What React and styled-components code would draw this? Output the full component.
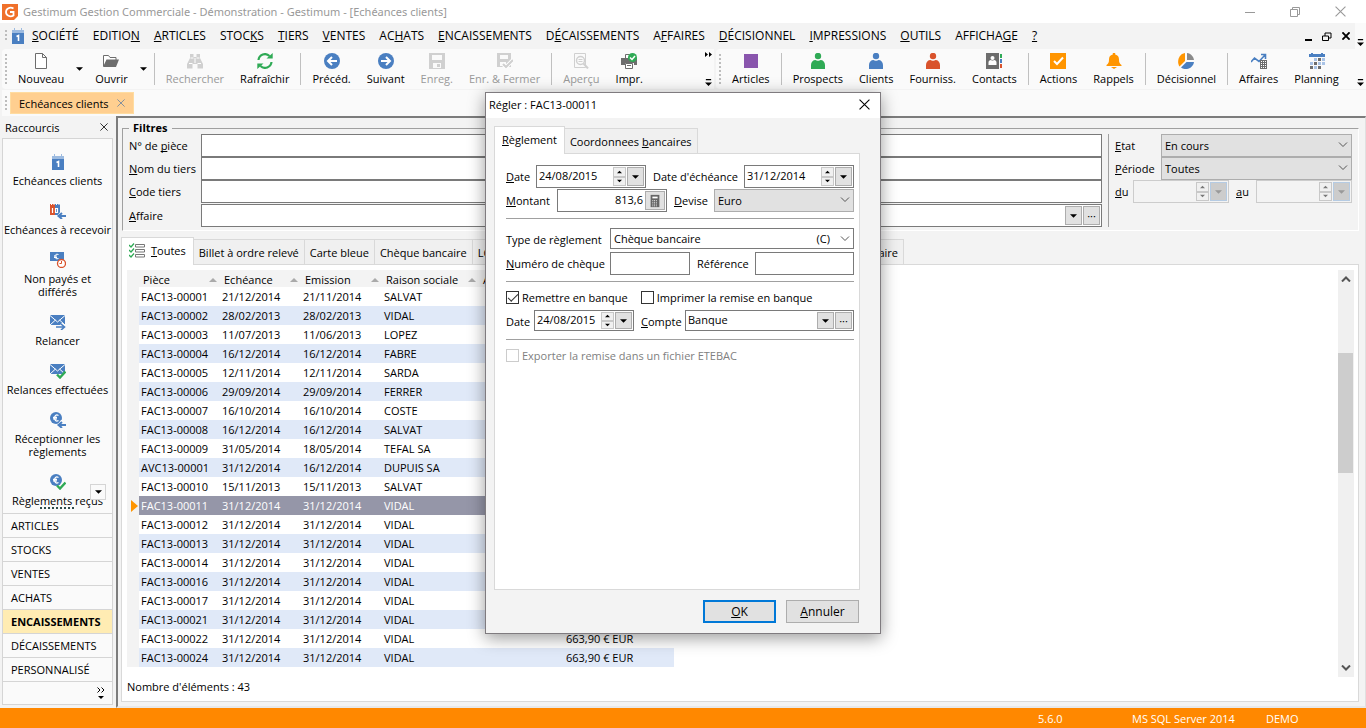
import React, { useState } from "react";
import styled, { createGlobalStyle, css } from "styled-components";

const blue = "#4a7fc1";
const gray = "#6d6d6d";
const pale = "#d0d0d0";
const green = "#2faa55";
const red = "#d9532c";
const orange = "#ff9500";

const menus = [
	"&SOCIÉTÉ", "EDITIO&N", "&ARTICLES", "STOC&KS", "&TIERS", "&VENTES", "AC&HATS", "&ENCAISSEMENTS",
	"D&ÉCAISSEMENTS", "A&FFAIRES", "&DÉCISIONNEL", "&IMPRESSIONS", "&OUTILS", "AFFICHA&GE", "&?",
];

const mainTools = [
	{ label: "Nouveau", icon: "file", arrow: true },
	{ label: "Ouvrir", icon: "folder", arrow: true },
	null,
	{ label: "Rechercher", icon: "binoculars", disabled: true },
	{ label: "Rafraîchir", icon: "refresh" },
	null,
	{ label: "Précéd.", icon: "prev" },
	{ label: "Suivant", icon: "next" },
	{ label: "Enreg.", icon: "save", disabled: true },
	{ label: "Enr. & Fermer", icon: "saveClose", disabled: true },
	null,
	{ label: "Aperçu", icon: "preview", disabled: true },
	{ label: "Impr.", icon: "print" },
];

const moduleTools = [
	{ label: "Articles", icon: "square" },
	null,
	{ label: "Prospects", icon: "personGreen" },
	{ label: "Clients", icon: "personBlue" },
	{ label: "Fourniss.", icon: "personRed" },
	{ label: "Contacts", icon: "contacts" },
	null,
	{ label: "Actions", icon: "actions" },
	{ label: "Rappels", icon: "bell" },
	null,
	{ label: "Décisionnel", icon: "pie" },
	null,
	{ label: "Affaires", icon: "affaires" },
	{ label: "Planning", icon: "planning" },
];

const shortcuts = [
	{ label: "Echéances clients", icon: "calendar" },
	{ label: "Echéances à recevoir", icon: "calendarIn" },
	{ label: "Non payés et différés", icon: "unpaid" },
	{ label: "Relancer", icon: "mailOut" },
	{ label: "Relances effectuées", icon: "mailDone" },
	{ label: "Réceptionner les règlements", icon: "euroIn" },
	{ label: "Règlements reçus", icon: "euroDone" },
];

const categories = ["ARTICLES", "STOCKS", "VENTES", "ACHATS", "ENCAISSEMENTS", "DÉCAISSEMENTS", "PERSONNALISÉ"];

const rows = [
	["FAC13-00001", "21/12/2014", "21/11/2014", "SALVAT"],
	["FAC13-00002", "28/02/2013", "28/02/2013", "VIDAL"],
	["FAC13-00003", "11/07/2013", "11/06/2013", "LOPEZ"],
	["FAC13-00004", "16/12/2014", "16/12/2014", "FABRE"],
	["FAC13-00005", "12/11/2014", "12/11/2014", "SARDA"],
	["FAC13-00006", "29/09/2014", "29/09/2014", "FERRER"],
	["FAC13-00007", "16/10/2014", "16/10/2014", "COSTE"],
	["FAC13-00008", "16/12/2014", "16/12/2014", "SALVAT"],
	["FAC13-00009", "31/05/2014", "18/05/2014", "TEFAL SA"],
	["AVC13-00001", "31/12/2014", "16/12/2014", "DUPUIS SA"],
	["FAC13-00010", "15/11/2013", "15/11/2013", "SALVAT"],
	["FAC13-00011", "31/12/2014", "31/12/2014", "VIDAL"],
	["FAC13-00012", "31/12/2014", "31/12/2014", "VIDAL"],
	["FAC13-00013", "31/12/2014", "31/12/2014", "VIDAL"],
	["FAC13-00014", "31/12/2014", "31/12/2014", "VIDAL"],
	["FAC13-00016", "31/12/2014", "31/12/2014", "VIDAL"],
	["FAC13-00017", "31/12/2014", "31/12/2014", "VIDAL"],
	["FAC13-00021", "31/12/2014", "31/12/2014", "VIDAL"],
	["FAC13-00022", "31/12/2014", "31/12/2014", "VIDAL", "663,90 € EUR"],
	["FAC13-00024", "31/12/2014", "31/12/2014", "VIDAL", "663,90 € EUR"],
];

const person = (color) => (
	<g fill={color}>
		<circle cx="8" cy="3" r="3.2" />
		<path d="M1 16v-4c0-3 2-5 4.500-5 1 1 4 1 5 0C13 7 15 9 15 12v4z" />
	</g>
);

const envelope = (
	<>
		<path fill={blue} d="M0 1h15v10H0z" />
		<path d="M0 1.500l7.500 6.500L15 1.500M0 11l5.500-5M15 11L9.500 6" fill="none" stroke="#fff" />
	</>
);

const euro = (
	<>
		<circle cx="6" cy="6" r="6" fill={blue} />
		<path d="M8.500 3.500C6 2 4.500 4 4.500 6s1.500 4 4 2.500M3 5.300h4M3 6.800h4" fill="none" stroke="#fff" strokeWidth="1.200" />
	</>
);

const smallCheck = <path d="M7 11.500l3 3 5.500-6" fill="none" stroke={green} strokeWidth="2.400" />;
const smallBack = (
	<>
		<path fill="#fafafa" d="M7 13l4-5h1v3h4v5H9z" />
		<path d="M16 13H9m3-3l-3.500 3 3.500 3" fill="none" stroke={blue} strokeWidth="2" />
	</>
);

const icons = {
	file: <path d="M2.500 .5h7l4 4v11h-11zM9.500 .5v4h4" fill="#fff" stroke={gray} />,
	folder: (
		<>
			<path d="M.5 13V2.500h5l1.500 2h6V7" fill="#fff" stroke={gray} />
			<path d="M3.500 6.500H16L13 14H0z" fill={gray} />
		</>
	),
	binoculars: (
		<>
			<path fill={pale} d="M3 1h3.500v3h3V1H13v4l3 6v4.500h-5.500V11h-5v4.500H0V11l3-6z" />
			<path d="M2 10.500h3.500M10.500 10.500H14M8 5v5M3.500 5h3M9.500 5h3" stroke="#fff" fill="none" />
		</>
	),
	refresh: (
		<>
			<path d="M1.500 7A6.500 6.500 0 0 1 12.500 3M14.500 9A6.500 6.500 0 0 1 3.500 13" fill="none" stroke={green} strokeWidth="2.200" />
			<path fill={green} d="M9.500 5.500h6.200V0zM6.500 10.500H.3V16z" />
		</>
	),
	prev: (
		<>
			<circle cx="8" cy="8" r="8" fill={blue} />
			<path d="M13 8H4m4-4L4 8l4 4" fill="none" stroke="#fff" strokeWidth="2" />
		</>
	),
	next: (
		<>
			<circle cx="8" cy="8" r="8" fill={blue} />
			<path d="M3 8h9M8 4l4 4-4 4" fill="none" stroke="#fff" strokeWidth="2" />
		</>
	),
	save: <path fillRule="evenodd" fill={pale} d="M0 0h16v16H0zM3 2h10v5H3zM4 10h8v5H4zM8 11h3v3H8z" />,
	saveClose: (
		<>
			<path fillRule="evenodd" fill={pale} d="M0 0h14v14H0zM3 2h8v4H3zM3 9h6v4H3z" />
			<path d="M6 11l3 3 7-7" fill="none" stroke="#fff" strokeWidth="4" />
			<path d="M6 11l3 3 7-7" fill="none" stroke={pale} strokeWidth="2.200" />
		</>
	),
	preview: (
		<g fill="none" stroke={pale}>
			<path d="M1.500 .5h11v14h-11z" />
			<circle cx="7.500" cy="7.500" r="4" strokeWidth="1.500" />
			<path d="M10.500 10.500l4.500 5" strokeWidth="2" />
			<path d="M5.500 6.500h4M5.500 8.500h4" />
		</g>
	),
	print: (
		<>
			<path fill={gray} d="M0 5h16v7h-3v-2H4v2H0z" />
			<path d="M4.500 10.500h7v5h-7zM4.500 5V1.500h4M6 12.500h4" fill="#fff" stroke={gray} />
			<circle cx="11.500" cy="4.500" r="4.500" fill={green} />
			<path d="M9 4.500l2 2 3-3.500" fill="none" stroke="#fff" strokeWidth="1.500" />
		</>
	),
	square: <path fill="#8955ad" d="M1 1h14v14H1z" />,
	personGreen: person(green),
	personBlue: person(blue),
	personRed: person(red),
	contacts: (
		<>
			<path fill={gray} d="M0 0h13v16H0z" />
			<circle cx="6.500" cy="5" r="2" fill="#fff" />
			<path fill="#fff" d="M2.500 12V9.500c0-1.500 1-2.500 2.500-2.500 1 .7 2 .7 3 0 1.500 0 2.500 1 2.500 2.500V12z" />
			<path fill={green} d="M14 1h2v4h-2z" />
			<path fill={blue} d="M14 6h2v4h-2z" />
			<path fill={red} d="M14 11h2v4h-2z" />
		</>
	),
	actions: (
		<>
			<path fill={orange} d="M0 0h16v16H0z" />
			<path d="M4 8l3 3 6-6.500" fill="none" stroke="#fff" strokeWidth="2" />
		</>
	),
	bell: (
		<path fill={orange} d="M6.800 0h2.400v1.500C12 2 13 4 13 6.500c0 3 .6 4 2.500 5.500v1H.5v-1C2.400 10.500 3 9.500 3 6.500 3 4 4 2 6.800 1.500zM5 14h6l-3 2z" />
	),
	pie: (
		<>
			<path fill={orange} d="M7 0v8l-5.500 5.500C-1.500 9 .5 1 7 0z" />
			<path fill="#8a8a8a" d="M9 0c4 .5 6.500 3.500 7 7H9z" />
			<path fill={blue} d="M8.500 9H16c-1 6.500-8.500 9-13 5.500z" />
		</>
	),
	affaires: (
		<>
			<path d="M0 9l3.500-4L8 8.500 14 2M10 1.500h4.500V6" fill="none" stroke={blue} strokeWidth="1.600" />
			<path fill={gray} d="M9 7h7v9H9z" />
			<path d="M10 8.500h5M10 10.500h5M10 12.500h5M10 14.500h5" stroke="#fff" strokeDasharray="1 1" />
		</>
	),
	planning: (
		<>
			<path fill={blue} d="M0 1h2V0h2v1h8V0h2v1h2v3H0z" />
			<path d="M5 6.500h11M1 10.500h15M1 14.500h11" stroke="#a9c3e6" strokeWidth="3" strokeDasharray="3 1" />
			<path fill={gray} d="M9 5h3v3H9zM1 13h3v3H1zM9 13h3v3H9zM5 9h3v3H5z" />
		</>
	),
	calendar: (
		<>
			<path fill="#9dbbe0" d="M2 2h2V0h1v2h6V0h1v2h2v3H2z" />
			<path fill={blue} d="M2 5h12v11H2z" />
			<path d="M6.500 8.500l2-1V13" fill="none" stroke="#fff" strokeWidth="1.600" />
		</>
	),
	calendarIn: (
		<>
			<path fill={red} d="M0 1h5v11H0z" />
			<path fill={blue} d="M5 1h5v11H5z" />
			<path d="M1.500 0v2M4 0v2M6.500 0v2M9 0v2" stroke="#fff" />
			<path d="M2.500 5v5M5.500 5.500h2v4h-2z" fill="none" stroke="#fff" strokeWidth="1.200" />
			{smallBack}
		</>
	),
	unpaid: (
		<>
			<path fill={blue} d="M0 0h14v9H0z" />
			<path d="M8.500 2.500C6 1.500 5 3 5 4.500s1 3 3.500 2M4 4h3M4 5.500h3" fill="none" stroke="#fff" />
			<circle cx="11.500" cy="11.500" r="4" fill="#fff" stroke={red} strokeWidth="1.300" />
			<path d="M11.500 9v2.500H9.500" fill="none" stroke={red} />
		</>
	),
	mailOut: (
		<>
			{envelope}
			<path d="M5 13h9m-3-3l3.500 3-3.500 3" fill="none" stroke="#fafafa" strokeWidth="4" />
			<path d="M6 13h8m-3-3l3.500 3-3.500 3" fill="none" stroke={blue} strokeWidth="1.600" />
		</>
	),
	mailDone: (<>{envelope}{smallCheck}</>),
	euroIn: (<>{euro}{smallBack}</>),
	euroDone: (<>{euro}{smallCheck}</>),
	list: (
		<>
			<path d="M6.500 1.500h9V4h-9zM6.500 6.500h9V9h-9zM6.500 11.500h9V14h-9z" fill="#fff" stroke="#777" />
			<path d="M0 2l2 2 3-3.500M0 7l2 2 3-3.500M0 12l2 2 3-3.500" fill="none" stroke={green} strokeWidth="1.300" />
		</>
	),
	logo: (
		<>
			<path fill="#f0702a" d="M0 0h16v12l-4 4H0z" />
			<path d="M11.500 4.500C8 2.500 4 4.500 4 8s4 5.500 7.500 3.500V8H8" fill="none" stroke="#fff" strokeWidth="1.800" />
		</>
	),
	calculator: (
		<>
			<path fill="#666" d="M3 1h10v14H3z" />
			<path fill="#fff" d="M5 3h6v2H5z" />
			<path d="M5 7.500h6M5 9.500h6M5 11.500h6M5 13.500h6" stroke="#fff" strokeDasharray="1 1" />
		</>
	),
};

const Icon = ({ name, size = 16 }) => (
	<svg width={size} height={size} viewBox="0 0 16 16" aria-hidden="true">{icons[name]}</svg>
);

const Caret = ({ up, w = 7 }) => (
	<svg width={w} height="4" viewBox="0 0 8 4" aria-hidden="true">
		<path d={up ? "M0 4h8L4 0z" : "M0 0h8L4 4z"} fill="currentColor" />
	</svg>
);

const Chevron = ({ up, bold }) => (
	<svg width="10" height="6" viewBox="0 0 10 6" aria-hidden="true">
		<path
			d={up ? "M1 5.500L5 1.500l4 4" : "M1 .5l4 4 4-4"}
			fill="none"
			stroke="currentColor"
			strokeWidth={bold ? 2 : 1}
		/>
	</svg>
);

const Cross = ({ size = 9, weight = 1 }) => (
	<svg width={size} height={size} viewBox="0 0 10 10" aria-hidden="true">
		<path d="M.5 .5l9 9M9.500 .5l-9 9" stroke="currentColor" strokeWidth={weight} />
	</svg>
);

const More = () => (
	<svg width="7" height="7" viewBox="0 0 8 8" aria-hidden="true">
		<path d="M1 0h6v1.500H1zM0 4h8L4 8z" />
	</svg>
);

// "&" marks the shortcut letter, as in the menu resources
const Mnemonic = ({ text }) => {
	const [before, after] = text.split("&");
	if (after === undefined) return before;
	return <span>{before}<u>{after[0]}</u>{after.slice(1)}</span>;
};

const Tools = ({ items }) =>
	items.map((item, i) =>
		item ? (
			<React.Fragment key={i}>
				<StTool disabled={item.disabled}>
					<Icon name={item.icon} />
					{item.label}
				</StTool>
				{item.arrow && <StToolArrow aria-label={item.label + " : options"}><Caret /></StToolArrow>}
			</React.Fragment>
		) : (
			<StToolSep key={i} />
		)
	);

const DateField = ({ id, value, disabled, width }) => (
	<StField $w={width} $disabled={disabled}>
		<StBareInput id={id} defaultValue={value} disabled={disabled} />
		<StSpin>
			<StSmallButton disabled={disabled} aria-label="Augmenter"><Caret up w={5} /></StSmallButton>
			<StSmallButton disabled={disabled} aria-label="Diminuer"><Caret w={5} /></StSmallButton>
		</StSpin>
		<StFieldButton disabled={disabled} aria-label="Calendrier"><Caret /></StFieldButton>
	</StField>
);

const Select = ({ id, value, white, extra }) => (
	<StSelectBox>
		<StSelect id={id} $white={white}><option>{value}</option></StSelect>
		{extra && <StSelectExtra>{extra}</StSelectExtra>}
		<StSelectArrow><Chevron /></StSelectArrow>
	</StSelectBox>
);

const Reglement = () => {
	const [remettre, setRemettre] = useState(true);
	const [imprimer, setImprimer] = useState(false);

	return (
		<StDialogPanel>
			<StFormRow>
				<StLabel $w={30} htmlFor="date"><Mnemonic text="&Date" /></StLabel>
				<DateField id="date" value="24/08/2015" width={110} />
				<StLabel $w={98} $gap htmlFor="echeance">Date d'échéance</StLabel>
				<DateField id="echeance" value="31/12/2014" />
			</StFormRow>
			<StFormRow>
				<StLabel $w={51} htmlFor="montant"><Mnemonic text="&Montant" /></StLabel>
				<StField $w={110}>
					<StBareInput $right id="montant" defaultValue="813,6" />
					<StFieldButton $wide aria-label="Calculatrice"><Icon name="calculator" size={14} /></StFieldButton>
				</StField>
				<StLabel $w={47} $gap htmlFor="devise"><Mnemonic text="&Devise" /></StLabel>
				<Select id="devise" value="Euro" />
			</StFormRow>
			<StRule />
			<StFormRow $short>
				<StLabel $w={104} htmlFor="type">Type de règlement</StLabel>
				<Select id="type" value="Chèque bancaire" extra="(C)" white />
			</StFormRow>
			<StFormRow>
				<StLabel $w={104} htmlFor="numero"><Mnemonic text="&Numéro de chèque" /></StLabel>
				<StField $w={80}><StBareInput id="numero" /></StField>
				<StLabel $w={65} $gap htmlFor="reference">Référence</StLabel>
				<StField><StBareInput id="reference" /></StField>
			</StFormRow>
			<StRule />
			<StChecks>
				<StCheck>
					<StCheckbox type="checkbox" checked={remettre} onChange={() => setRemettre(!remettre)} />
					Remettre en banque
				</StCheck>
				<StCheck>
					<StCheckbox type="checkbox" checked={imprimer} onChange={() => setImprimer(!imprimer)} />
					Imprimer la remise en banque
				</StCheck>
			</StChecks>
			<StFormRow $short>
				<StLabel $w={28} htmlFor="dateRemise">Date</StLabel>
				<DateField id="dateRemise" value="24/08/2015" width={100} />
				<StLabel $w={51} $gap htmlFor="compte"><Mnemonic text="&Compte" /></StLabel>
				<StField>
					<StBareInput id="compte" defaultValue="Banque" />
					<StFieldButton aria-label="Liste"><Caret /></StFieldButton>
					<StFieldButton aria-label="Parcourir">···</StFieldButton>
				</StField>
			</StFormRow>
			<StRule />
			<StChecks>
				<StCheck $disabled>
					<StCheckbox type="checkbox" disabled />
					Exporter la remise dans un fichier ETEBAC
				</StCheck>
			</StChecks>
		</StDialogPanel>
	);
};

const Dialog = () => (
	<StOverlay>
		<StDialog role="dialog" aria-labelledby="dialogTitle">
			<StDialogTitle>
				<span id="dialogTitle">Régler : FAC13-00011</span>
				<StPlainButton aria-label="Fermer"><Cross size={11} /></StPlainButton>
			</StDialogTitle>
			<StDialogBody>
				<StTabs>
					<StTab $active><Mnemonic text="&Règlement" /></StTab>
					<StTab><Mnemonic text="Coordonnees &bancaires" /></StTab>
				</StTabs>
				<Reglement />
				<StDialogButtons>
					<StButton $primary><Mnemonic text="&OK" /></StButton>
					<StButton><Mnemonic text="&Annuler" /></StButton>
				</StDialogButtons>
			</StDialogBody>
		</StDialog>
	</StOverlay>
);

const Filters = () => (
	<StFieldset>
		<legend>Filtres</legend>
		<StFilterBody>
			<StFilterLeft>
				<StLabel htmlFor="piece"><Mnemonic text="N° de &pièce" /></StLabel>
				<StField><StBareInput id="piece" /></StField>
				<StLabel htmlFor="nom"><Mnemonic text="&Nom du tiers" /></StLabel>
				<StField><StBareInput id="nom" /></StField>
				<StLabel htmlFor="code"><Mnemonic text="&Code tiers" /></StLabel>
				<StField><StBareInput id="code" /></StField>
				<StLabel htmlFor="affaire"><Mnemonic text="&Affaire" /></StLabel>
				<StField>
					<StBareInput id="affaire" />
					<StFieldButton aria-label="Liste"><Caret /></StFieldButton>
					<StFieldButton aria-label="Parcourir">···</StFieldButton>
				</StField>
			</StFilterLeft>
			<StFilterRight>
				<StFilterLine>
					<StLabel $w={46} htmlFor="etat"><Mnemonic text="&Etat" /></StLabel>
					<Select id="etat" value="En cours" />
				</StFilterLine>
				<StFilterLine>
					<StLabel $w={46} htmlFor="periode"><Mnemonic text="&Période" /></StLabel>
					<Select id="periode" value="Toutes" />
				</StFilterLine>
				<StFilterLine>
					<StLabel $w={18} htmlFor="du"><Mnemonic text="&du" /></StLabel>
					<DateField id="du" width={96} disabled />
					<StLabel $w={27} $gap htmlFor="au"><Mnemonic text="&au" /></StLabel>
					<DateField id="au" width={96} disabled />
				</StFilterLine>
			</StFilterRight>
		</StFilterBody>
	</StFieldset>
);

const Grid = () => {
	const [selected, setSelected] = useState("FAC13-00011");

	return (
		<StTable>
			<colgroup>
				<col width="12" /><col width="81" /><col width="81" /><col width="81" />
				<col width="97" /><col width="85" /><col width="110" />
			</colgroup>
			<thead>
				<tr>
					<th aria-label="Sélection" />
					{["Pièce", "Echéance", "Emission", "Raison sociale"].map((name) => (
						<th key={name}><StHead>{name}<Caret up w={8} /></StHead></th>
					))}
					<th><StHead>A</StHead></th>
					<th aria-label="Montant" />
				</tr>
			</thead>
			<tbody>
				{rows.map(([piece, echeance, emission, raison, montant]) => (
					<StRow key={piece} $selected={piece === selected} onClick={() => setSelected(piece)}>
						<StMarker>
							{piece === selected && (
								<svg width="7" height="12" viewBox="0 0 7 12"><path d="M0 0l7 6-7 6z" fill={orange} /></svg>
							)}
						</StMarker>
						<td>{piece}</td>
						<td>{echeance}</td>
						<td>{emission}</td>
						<td>{raison}</td>
						<td />
						<td>{montant}</td>
					</StRow>
				))}
			</tbody>
		</StTable>
	);
};

const Sidebar = () => (
	<StSidebar>
		<StSideTitle>
			Raccourcis
			<StPlainButton aria-label="Fermer les raccourcis"><Cross size={8} /></StPlainButton>
		</StSideTitle>
		<StSideBox>
			<StShortcuts>
				{shortcuts.map((s) => (
					<StShortcut key={s.label}><Icon name={s.icon} />{s.label}</StShortcut>
				))}
				<StScrollDown aria-label="Défiler"><Caret /></StScrollDown>
				<StGripDots />
			</StShortcuts>
			{categories.map((c) => (
				<StCategory key={c} $active={c === "ENCAISSEMENTS"}>{c}</StCategory>
			))}
			<StSideFoot aria-label="Configurer">
				<svg width="8" height="13" viewBox="0 0 8 13">
					<path d="M.5 .5L3 3 .5 5.500M4.500 .5L7 3 4.500 5.500" fill="none" stroke="#000" />
					<path d="M1 9h6l-3 3z" />
				</svg>
			</StSideFoot>
		</StSideBox>
	</StSidebar>
);

const App = () => {
	return (
		<StApp>
			<GlobalStyle />
			<StTitleBar>
				<Icon name="logo" />
				<StTitle>Gestimum Gestion Commerciale - Démonstration - Gestimum - [Echéances clients]</StTitle>
				<StWindowButtons>
					<StPlainButton aria-label="Réduire">
						<svg width="10" height="10"><path d="M0 5.500h10" stroke="currentColor" /></svg>
					</StPlainButton>
					<StPlainButton aria-label="Restaurer">
						<svg width="10" height="10"><path d="M.5 2.500h7v7h-7zM2.500 2.500v-2h7v7h-2" fill="none" stroke="currentColor" /></svg>
					</StPlainButton>
					<StPlainButton aria-label="Quitter"><Cross size={11} /></StPlainButton>
				</StWindowButtons>
			</StTitleBar>
			<StMenuBar>
				<StGrip $h={12} />
				<Icon name="calendar" />
				<StMenus>
					{menus.map((m) => <StMenu key={m}><Mnemonic text={m} /></StMenu>)}
				</StMenus>
				<StChildButtons>
					<StPlainButton aria-label="Réduire la fiche">
						<svg width="7" height="9"><path d="M0 8h7" stroke="#000" strokeWidth="2" /></svg>
					</StPlainButton>
					<StPlainButton aria-label="Restaurer la fiche">
						<svg width="10" height="9"><path d="M.5 4h6v4.500h-6zM3 4V1h6v5H6.500" fill="none" stroke="#000" /></svg>
					</StPlainButton>
					<StPlainButton aria-label="Fermer la fiche"><Cross size={8} weight={2.400} /></StPlainButton>
				</StChildButtons>
				<StBarEnd><More /></StBarEnd>
			</StMenuBar>
			<StToolbars>
				<StToolbar $first>
					<StGrip $h={30} />
					<Tools items={mainTools} />
					<StBarEnd $both>
						<svg width="7" height="5" viewBox="0 0 7 5"><path d="M0 0l3 2.500L0 5zM4 0l3 2.500L4 5z" /></svg>
						<More />
					</StBarEnd>
				</StToolbar>
				<StToolbar>
					<StGrip $h={30} />
					<Tools items={moduleTools} />
					<StBarEnd><More /></StBarEnd>
				</StToolbar>
			</StToolbars>
			<StDocTabs>
				<StGrip $h={14} />
				<StDocTab>Echéances clients <Cross size={8} /></StDocTab>
			</StDocTabs>
			<StMain>
				<Sidebar />
				<StContent>
					<Filters />
					<StTabs>
						<StTab $active><Icon name="list" /><Mnemonic text="&Toutes" /></StTab>
						<StTab>Billet à ordre relevé</StTab>
						<StTab>Carte bleue</StTab>
						<StTab>Chèque bancaire</StTab>
						<StTab $wide>LCR</StTab>
						<StTab>Virement bancaire</StTab>
					</StTabs>
					<StPanel>
						<StGridArea>
							<Grid />
							<StScrollbar>
								<Chevron up bold />
								<StThumb />
								<Chevron bold />
							</StScrollbar>
						</StGridArea>
						<StCount>Nombre d'éléments : 43</StCount>
					</StPanel>
				</StContent>
			</StMain>
			<StStatus>
				<span>5.6.0</span>
				<span>MS SQL Server 2014</span>
				<span>DEMO</span>
			</StStatus>
			<Dialog />
		</StApp>
	);
};

export default App;

const GlobalStyle = createGlobalStyle`
	* {
		box-sizing: border-box;
	}
	body {
		margin: 0;
	}
	body, button, input, select {
		font-family: "Open Sans", "Noto Sans", sans-serif;
		font-size: 11px;
		line-height: 13px;
		color: #000;
	}
	button {
		border: none;
		background: none;
		padding: 0;
	}
	svg {
		display: block;
		flex: none;
	}
	u {
		text-decoration-thickness: 1px;
		text-decoration-skip-ink: none;
		text-underline-offset: 1px;
	}
`;

const StApp = styled.div`
	position: relative;
	display: flex;
	flex-direction: column;
	min-height: 100vh;
	background: #f3f3f3;
`;

const StTitleBar = styled.header`
	display: flex;
	align-items: center;
	height: 23px;
	padding: 0 20px 0 2px;
	gap: 5px;
	background: #fff;
	color: #999;
`;

const StTitle = styled.span`
	flex: 1;
	font-family: "Noto Sans", sans-serif;
	line-height: 16px;
`;

const StPlainButton = styled.button`
	display: flex;
	align-items: center;
	color: inherit;
`;

const StWindowButtons = styled.div`
	display: flex;
	gap: 35px;
`;

const StMenuBar = styled.nav`
	display: flex;
	align-items: center;
	height: 26px;
	padding-left: 5px;
`;

const StGrip = styled.div`
	width: 2px;
	height: ${(p) => p.$h}px;
	margin-right: 3px;
	background: repeating-linear-gradient(#bdbdbd 0 2px, transparent 2px 4px);
`;

const StMenus = styled.div`
	display: flex;
	flex: 1;
	gap: 14px;
	padding-left: 6px;
`;

const StMenu = styled.button`
	font-size: 12px;
	line-height: 16px;
`;

const StChildButtons = styled.div`
	display: flex;
	gap: 10px;
	padding-right: 5px;
`;

const StBarEnd = styled.div`
	display: flex;
	flex-direction: column;
	align-items: center;
	justify-content: ${(p) => (p.$both ? "space-between" : "flex-end")};
	align-self: stretch;
	width: 11px;
	margin-left: auto;
	padding: 3px 0;
	background: #fafafa;
`;

const StToolbars = styled.div`
	display: flex;
	gap: 2px;
	padding: 0 0 1px 2px;
`;

const StToolbar = styled.div`
	display: flex;
	align-items: center;
	flex: ${(p) => (p.$first ? "none" : "1")};
	width: ${(p) => (p.$first ? "712px" : "auto")};
	height: 40px;
	padding-left: 3px;
	border-radius: 4px;
	background: #fafafa;
`;

const StTool = styled.button`
	display: flex;
	flex-direction: column;
	align-items: center;
	gap: 2px;
	padding: 2px 8px 0;
	line-height: 16px;
	white-space: nowrap;
	color: ${(p) => (p.disabled ? "#999" : "#000")};
`;

const StToolArrow = styled.button`
	padding: 0 4px;
`;

const StToolSep = styled.div`
	width: 1px;
	height: 32px;
	margin: 0 3px;
	background: #c0c0c0;
`;

const StDocTabs = styled.div`
	display: flex;
	align-items: center;
	height: 26px;
	margin-left: 2px;
	padding-left: 3px;
	background: #fafafa;
`;

const StDocTab = styled.button`
	display: flex;
	align-items: center;
	gap: 8px;
	height: 22px;
	padding: 0 8px;
	border: 1px solid #ffdca0;
	background: #ffcf90;

	svg {
		color: #66809f;
	}
`;

const StMain = styled.main`
	display: flex;
	flex: 1;
`;

const StSidebar = styled.aside`
	display: flex;
	flex-direction: column;
	width: 116px;
	padding: 0 3px 3px 2px;
`;

const StSideTitle = styled.div`
	display: flex;
	align-items: center;
	justify-content: space-between;
	height: 22px;
	padding: 0 5px 0 3px;
`;

const StSideBox = styled.div`
	display: flex;
	flex-direction: column;
	flex: 1;
	border: 1px solid #d5d5d5;
	background: #fafafa;
`;

const StShortcuts = styled.div`
	position: relative;
	display: flex;
	flex-direction: column;
	align-items: center;
	gap: 16px;
	height: 374px;
	padding-top: 15px;
	overflow: hidden;
`;

const StShortcut = styled.button`
	display: flex;
	flex-direction: column;
	align-items: center;
	flex: none;
	width: 108px;
	gap: 4px;
`;

const StScrollDown = styled.button`
	position: absolute;
	right: 6px;
	bottom: 13px;
	display: flex;
	align-items: center;
	justify-content: center;
	width: 16px;
	height: 16px;
	border: 1px solid #d5d5d5;
	background: #fafafa;
`;

const StGripDots = styled.div`
	position: absolute;
	left: 37px;
	bottom: 4px;
	width: 35px;
	height: 2px;
	background: repeating-linear-gradient(90deg, #2d4a4a 0 2px, transparent 2px 4px);
`;

const StCategory = styled.button`
	height: 24px;
	padding-left: 8px;
	border-top: 1px solid #d5d5d5;
	background: ${(p) => (p.$active ? "#ffecb3" : "transparent")};
	font-weight: ${(p) => (p.$active ? 700 : 400)};
	text-align: left;
`;

const StSideFoot = styled.button`
	display: flex;
	align-items: center;
	justify-content: flex-end;
	flex: 1;
	padding-right: 7px;
	border-top: 1px solid #d5d5d5;
`;

const StContent = styled.section`
	display: flex;
	flex-direction: column;
	flex: 1;
	min-width: 0;
	padding: 4px 6px 4px 3px;
	border: solid;
	border-width: 2px 1px 2px 2px;
	border-color: #7c7c7c #e0e0e0 #e8e8e8 #7c7c7c;
`;

const StFieldset = styled.fieldset`
	min-width: 0;
	margin: 0 0 6px 1px;
	padding: 0 6px 3px;
	border: 1px solid #fff;
	border-top-color: #a0a0a0;
	border-left-color: #a0a0a0;

	legend {
		padding: 0 4px;
		font-weight: 700;
		line-height: 12px;
	}
`;

const StFilterBody = styled.div`
	display: flex;
	gap: 6px;
`;

const StFilterLeft = styled.div`
	display: grid;
	flex: 1;
	grid-template-columns: 72px 1fr;
	grid-template-rows: 23px 23px 24px 23px;
`;

const StFilterRight = styled.div`
	width: 244px;
	padding-left: 6px;
	border-left: 1px solid #a0a0a0;
`;

const StFilterLine = styled.div`
	display: flex;
	height: 23px;
`;

const StLabel = styled.label`
	display: block;
	flex: none;
	width: ${(p) => (p.$w ? p.$w + "px" : "auto")};
	padding: 5px 0 0 ${(p) => (p.$gap ? 7 : 0)}px;
	line-height: 14px;
	white-space: nowrap;
`;

const StField = styled.div`
	display: flex;
	flex: ${(p) => (p.$w ? "none" : 1)};
	gap: 1px;
	width: ${(p) => (p.$w ? p.$w + "px" : "auto")};
	min-width: 0;
	height: 100%;
	max-height: 23px;
	padding: 1px;
	border: 1px solid ${(p) => (p.$disabled ? "#ccc" : "#7a7a7a")};
	background: ${(p) => (p.$disabled ? "#f3f3f3" : "#fff")};
`;

const StBareInput = styled.input`
	flex: 1;
	width: 0;
	min-width: 0;
	padding: 0 1px 2px;
	border: none;
	outline: none;
	background: transparent;
	text-align: ${(p) => (p.$right ? "right" : "left")};
`;

const StSpin = styled.div`
	display: flex;
	flex-direction: column;
	width: 13px;
`;

const buttonFace = css`
	display: flex;
	align-items: center;
	justify-content: center;
	border: 1px solid #adadad;
	background: #e1e1e1;
`;

const StSmallButton = styled.button`
	${buttonFace}
	flex: 1;
	border-color: #c8c8c8;
	background: #f0f0f0;
	color: ${(p) => (p.disabled ? "#777" : "#000")};
`;

const StFieldButton = styled.button`
	${buttonFace}
	width: ${(p) => (p.$wide ? 20 : 17)}px;
	line-height: 8px;

	&:disabled {
		border-color: #b5cbe3;
		background: #ccc;
		color: #999;
	}
`;

const StSelectBox = styled.div`
	position: relative;
	flex: 1;
	height: 100%;
`;

const StSelect = styled.select`
	appearance: none;
	width: 100%;
	height: 100%;
	padding: 0 3px;
	border: 1px solid ${(p) => (p.$white ? "#7a7a7a" : "#adadad")};
	border-radius: 0;
	background: ${(p) => (p.$white ? "#fff" : "#e1e1e1")};
`;

const StSelectExtra = styled.span`
	position: absolute;
	top: 4px;
	right: 24px;
	pointer-events: none;
`;

const StSelectArrow = styled.span`
	position: absolute;
	top: 8px;
	right: 4px;
	color: #555;
	pointer-events: none;
`;

const StTabs = styled.div`
	display: flex;
	align-items: flex-end;
	height: 27px;
`;

const StTab = styled.button`
	display: flex;
	align-items: center;
	gap: 6px;
	height: ${(p) => (p.$active ? 28 : 25)}px;
	min-width: ${(p) => (p.$wide ? "326px" : "0")};
	margin-bottom: ${(p) => (p.$active ? -1 : 0)}px;
	padding: 0 ${(p) => (p.$active ? 7 : 5)}px ${(p) => (p.$active ? 2 : 0)}px;
	border: 1px solid #d9d9d9;
	border-left-width: ${(p) => (p.$active ? 1 : 0)}px;
	border-bottom: none;
	background: ${(p) => (p.$active ? "#fff" : "#f0f0f0")};
	white-space: nowrap;
	z-index: ${(p) => (p.$active ? 1 : 0)};
`;

const StPanel = styled.div`
	display: flex;
	flex-direction: column;
	flex: 1;
	padding: 5px 4px 7px 5px;
	border: 1px solid #d9d9d9;
	background: #fff;
`;

const StGridArea = styled.div`
	display: flex;
	align-items: stretch;
	justify-content: space-between;
	height: 407px;
`;

const StTable = styled.table`
	width: 547px;
	height: 397px;
	border-collapse: collapse;
	table-layout: fixed;

	th {
		height: 17px;
		padding: 2px 3px 0 4px;
		background: #f3f3f3;
		font-weight: 400;
		text-align: left;
	}

	td {
		height: 19px;
		padding: 0 2px;
		white-space: nowrap;
	}
`;

const StHead = styled.div`
	display: flex;
	align-items: center;
	justify-content: space-between;
	white-space: nowrap;

	svg {
		color: #aaa;
	}
`;

const StMarker = styled.td`
	background: #f3f3f3;

	svg {
		margin-left: 2px;
	}
`;

const StRow = styled.tr`
	&:nth-child(even) td:not(:first-child) {
		background: #e0e9f8;
	}

	${(p) => p.$selected && css`
		&& td:not(:first-child) {
			background: #9596a8;
			color: #fff;
		}
	`}
`;

const StScrollbar = styled.div`
	display: flex;
	flex-direction: column;
	align-items: center;
	width: 16px;
	padding: 6px 0;
	background: #f0f0f0;
	color: #555;
`;

const StThumb = styled.div`
	width: 15px;
	height: 120px;
	margin: 71px 1px auto 0;
	background: #cdcdcd;
`;

const StCount = styled.div`
	padding-top: 3px;
`;

const StStatus = styled.footer`
	display: grid;
	grid-template-columns: 94px 134px 100px;
	justify-content: end;
	align-items: center;
	height: 20px;
	background: #ff8800;
	color: #fff;
`;

const StOverlay = styled.div`
	position: absolute;
	inset: 0;
	display: flex;
	align-items: center;
	justify-content: center;
	padding-bottom: 2px;
	pointer-events: none;
`;

const StDialog = styled.div`
	width: 396px;
	border: 1px solid #7f7b7f;
	background: #f3f3f3;
	box-shadow: 0 4px 16px rgba(0, 0, 0, 0.4);
	pointer-events: auto;
`;

const StDialogTitle = styled.div`
	display: flex;
	align-items: center;
	justify-content: space-between;
	height: 25px;
	padding: 0 10px 2px 3px;
	background: #fff;
`;

const StDialogBody = styled.div`
	padding: 8px 20px 10px 8px;
`;

const StDialogPanel = styled.div`
	display: flex;
	flex-direction: column;
	min-height: 437px;
	padding: 11px 5px 0 11px;
	border: 1px solid #d9d9d9;
	background: #fff;
`;

const StFormRow = styled.div`
	display: flex;
	height: ${(p) => (p.$short ? 21 : 23)}px;
	margin-bottom: ${(p) => (p.$short ? 3 : 1)}px;
`;

const StRule = styled.hr`
	width: 100%;
	height: 1px;
	margin: 5px 0 9px;
	border: none;
	background: #a0a0a0;
`;

const StChecks = styled.div`
	display: flex;
	gap: 13px;
	margin-bottom: 6px;
`;

const StCheck = styled.label`
	display: flex;
	align-items: center;
	gap: 3px;
	color: ${(p) => (p.$disabled ? "#808080" : "#000")};
`;

const StCheckbox = styled.input`
	appearance: none;
	display: grid;
	place-items: center;
	width: 13px;
	height: 13px;
	margin: 0;
	border: 1px solid #333;
	background: #fff;

	&:disabled {
		border-color: #ccc;
	}

	&:checked::before {
		content: "";
		width: 9px;
		height: 4px;
		margin-bottom: 3px;
		border-left: 1px solid #333;
		border-bottom: 1px solid #333;
		transform: rotate(-45deg);
	}
`;

const StDialogButtons = styled.div`
	display: flex;
	justify-content: flex-end;
	gap: 10px;
	padding: 10px 1px 0 0;
`;

const StButton = styled.button`
	width: 73px;
	height: 23px;
	border: ${(p) => (p.$primary ? "2px solid #0078d7" : "1px solid #adadad")};
	background: #e1e1e1;
	font-size: 12px;
`;
